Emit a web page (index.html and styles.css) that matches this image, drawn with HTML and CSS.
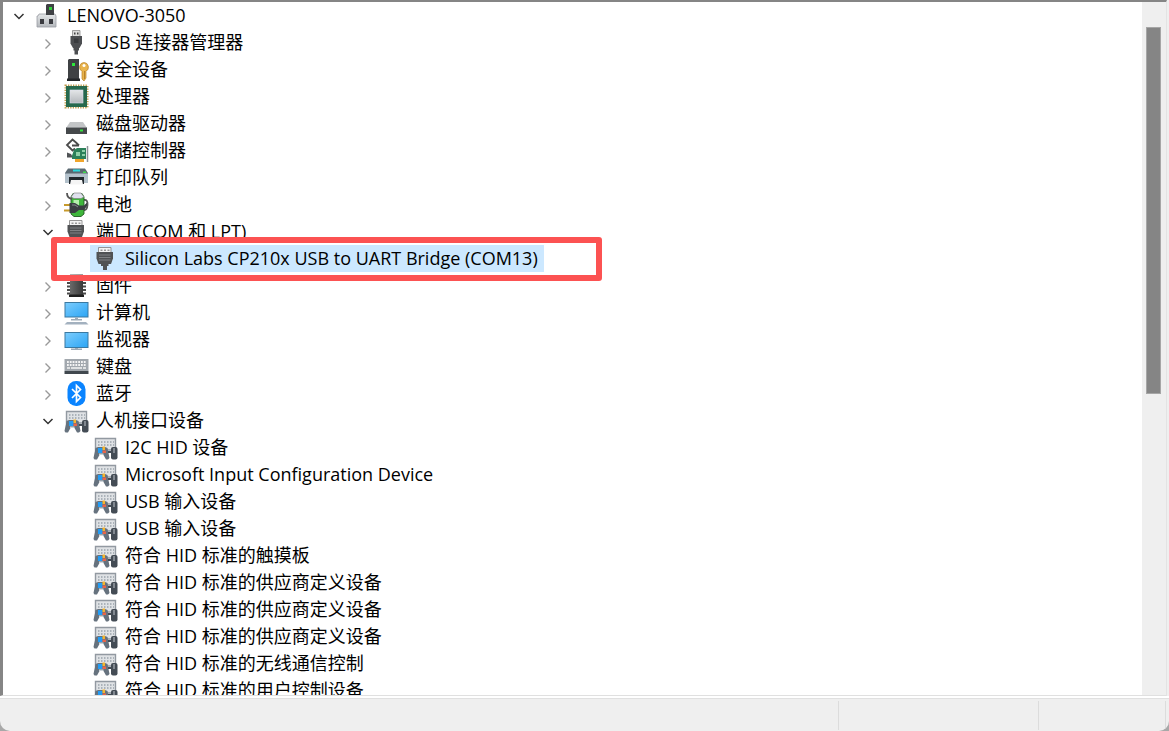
FILE: index.html
```html
<!DOCTYPE html>
<html lang="zh-CN">
<head>
    <meta charset="UTF-8">
    <meta name="viewport" content="width=device-width, initial-scale=1.0">
    <title>设备管理器</title>
    <link rel="stylesheet" href="styles.css">
</head>
<body>
    <svg class="sprite" aria-hidden="true">
        <defs>
            <linearGradient id="metal" x1="0" y1="0" x2="0" y2="1">
                <stop offset="0" stop-color="#e4e6e8"/>
                <stop offset="1" stop-color="#b4b8bc"/>
            </linearGradient>
            <linearGradient id="screen" x1="0" y1="0" x2="1" y2="1">
                <stop offset="0" stop-color="#7dcdfd"/>
                <stop offset="1" stop-color="#2ba5f5"/>
            </linearGradient>
            <linearGradient id="dark" x1="0" y1="0" x2="1" y2="0">
                <stop offset="0" stop-color="#6a6a6a"/>
                <stop offset="1" stop-color="#393939"/>
            </linearGradient>
        </defs>

        <symbol id="chev-right" viewBox="0 0 20 27">
            <path d="M7.5 10.5 12 15 7.5 19.5" fill="none" stroke="#999" stroke-width="1.4"/>
        </symbol>
        <symbol id="chev-down" viewBox="0 0 20 27">
            <path d="M5.5 12 10 16.5 14.5 12" fill="none" stroke="#333" stroke-width="1.5"/>
        </symbol>

        <symbol id="i-root" viewBox="0 0 25 27">
            <path d="M3 14 4 12H20L21 14V25H2V14Z" fill="url(#metal)" stroke="#9a9da3" stroke-width=".8"/>
            <path d="M11 3 12 2H19V13H11Z" fill="#3f4144"/>
            <rect x="14" y="5" width="3" height="3" fill="#32d23c"/>
            <path d="M5 17H9V22H5ZM14 17H18V22H14Z" fill="#3a3b40"/>
        </symbol>
        <symbol id="i-usb" viewBox="0 0 25 27">
            <path d="M8.5 1.5H16V8H8.5Z" fill="#dcdcdc" stroke="#8c8c8c" stroke-width=".8"/>
            <path d="M10 3.500h1.500v2H10ZM13 3.500h1.500v2H13Z" fill="#444"/>
            <path d="M6.500 7H18V14.500L15.500 19H9L6.500 14.500Z" fill="#4c4e51"/>
            <path d="M9.500 18H15V21.500H14V25.500H10.500V21.500H9.500Z" fill="#4c4e51"/>
            <path d="M10 9.500H14.500V14H10Z" fill="#393b3e"/>
        </symbol>
        <symbol id="i-security" viewBox="0 0 25 27">
            <path d="M4 4 5 3H15V23H4Z" fill="#3f4144"/>
            <path d="M3 22.500H16V25H3Z" fill="#25272a"/>
            <rect x="8" y="7" width="3" height="3" fill="#2ee83a"/>
            <path d="M20 6.500a4.700 4.700 0 0 1 2 8.800V22l-2 3-2-2v-7.700A4.700 4.700 0 0 1 20 6.500Z" fill="#e9b44c" stroke="#b8812a" stroke-width=".7"/>
            <circle cx="20" cy="9.500" r="1.500" fill="#fff"/>
            <path d="M20.500 15V23" stroke="#b8812a"/>
        </symbol>
        <symbol id="i-cpu" viewBox="0 0 25 27">
            <rect x="1.500" y="2.500" width="22" height="22" fill="none" stroke="#c09a4a" stroke-width="2" stroke-dasharray="1.300 1.200"/>
            <rect x="2" y="3" width="21" height="21" fill="#27694d"/>
            <rect x="6" y="7" width="13" height="13" fill="url(#metal)" stroke="#dde" stroke-width=".6"/>
        </symbol>
        <symbol id="i-disk" viewBox="0 0 25 27">
            <path d="M6 12H19L23 18H2Z" fill="#c3c5c7"/>
            <path d="M2 17.500H23V24H2Z" fill="#45484b"/>
            <path d="M2 17.500H23" stroke="#8d9093"/>
            <rect x="16" y="19.500" width="3" height="2" fill="#35e23f"/>
        </symbol>
        <symbol id="i-storage" viewBox="0 0 25 27">
            <path d="M12 5.500 8.500 2.500 3 8 8.500 13.500 11 11.500M8 8.500H15M12 5.500 15 8.500" fill="none" stroke="#4a4a4a" stroke-width="1.800"/>
            <path d="M3 15.500 7 17 9 20.500H3Z" fill="#505356"/>
            <path d="M10 13 13 11H22V22H8V18.500Z" fill="#2c8059"/>
            <path d="M12 15h4v4h-4ZM18 13h3v2h-3ZM18 17h3v2h-3Z" fill="#8fd0a8"/>
            <path d="M11 22H20V25H11Z" fill="#f0a52c"/>
            <path d="M23.500 9V25" stroke="#8d9297" stroke-width="1.500"/>
        </symbol>
        <symbol id="i-printer" viewBox="0 0 25 27">
            <path d="M4 4.500H21L24 9V11H1V9Z" fill="#5b6972"/>
            <path d="M9 5.500H16V7.500H9Z" fill="#2bd9dc"/>
            <path d="M19 7.500h3v1.500h-3Z" fill="#3fe04a"/>
            <path d="M1 9.500H24V19H1Z" fill="#b3c1cb"/>
            <path d="M5 13H20V20H5Z" fill="#22292e"/>
            <path d="M7 16H18L19 20.500H6Z" fill="#f5f5f5"/>
        </symbol>
        <symbol id="i-battery" viewBox="0 0 25 27">
            <path d="M20 9Q24 8.500 23.500 14T20 19" fill="none" stroke="#555" stroke-width="1.800"/>
            <path d="M7 6 9 2.500H18L20 6V23L17 25.500H10L7 23Z" fill="#3fb63c" stroke="#235a22" stroke-width=".9"/>
            <path d="M7 6 10 2H17L20 6 17 7.500H10Z" fill="#e0e1ee" stroke="#777" stroke-width=".6"/>
            <path d="M9.500 9H15V17H9.500Z" fill="#b6efad"/>
            <path d="M3 2Q3 7 8 8" fill="none" stroke="#555" stroke-width="1.800"/>
            <path d="M0 14H7M0 19.500H7" stroke="#c79a2c" stroke-width="2"/>
            <path d="M5.500 12H11L15 14.500H20L23 11.500V15L20 19H15L11 22H5.500Z" fill="#3b3e42"/>
            <path d="M8 14H11L14 16" fill="none" stroke="#85898d"/>
        </symbol>
        <symbol id="i-port" viewBox="0 0 25 27">
            <path d="M5.500 2.500H18V8H5.500Z" fill="#f4f4f4" stroke="#8b8b8b" stroke-width=".9"/>
            <path d="M7.500 4.500h2v1.500h-2ZM11 4.500h2v1.500h-2ZM14.500 4.500h2v1.500h-2Z" fill="#999"/>
            <path d="M3.500 7H20V13.500L18 19H5.500L3.500 13.500Z" fill="#505254"/>
            <path d="M6 10H17.500M6 12.500H17.500M6 15H17.500" stroke="#85878a" stroke-width=".9"/>
            <path d="M8 18.500H15.500V21H14V25H10V21H8Z" fill="#505254"/>
        </symbol>
        <symbol id="i-firmware" viewBox="0 0 25 27">
            <path d="M4.500 3V24M20.500 3V24" stroke="#4a4a4a" stroke-width="3" stroke-dasharray="2 1.500"/>
            <path d="M6 2.500H19V25H6Z" fill="url(#dark)"/>
            <path d="M5 22.500H20V25H5Z" fill="#1f1f1f"/>
        </symbol>
        <symbol id="i-computer" viewBox="0 0 25 27">
            <rect x="1" y="3.500" width="23" height="14.500" fill="url(#screen)" stroke="#3a79a1"/>
            <path d="M11 18.500H14V20H18V21.500H7V20H11Z" fill="#9eabb7"/>
            <path d="M3 23H22L24.500 25.500H.500Z" fill="#a3b1bf"/>
        </symbol>
        <symbol id="i-monitor" viewBox="0 0 25 27">
            <rect x="1" y="6.500" width="23" height="15" fill="url(#screen)" stroke="#3a79a1"/>
            <path d="M11 22H14V22.500H18V24H7V22.500H11Z" fill="#9eabb7"/>
        </symbol>
        <symbol id="i-keyboard" viewBox="0 0 25 27">
            <path d="M.5 6H24.500V18H.5Z" fill="#a2a8ae"/>
            <path d="M3 9H22M3 12H22" stroke="#f4f4f4" stroke-width="1.800" stroke-dasharray="1.800 1"/>
            <path d="M3 15H6M7 15H18M19 15H22" stroke="#f4f4f4" stroke-width="1.600"/>
            <path d="M.5 18H24.500V21H.5Z" fill="#41484e"/>
        </symbol>
        <symbol id="i-bluetooth" viewBox="0 0 25 27">
            <rect x="3.500" y="1" width="18" height="25" rx="8.500" fill="#0a84ff"/>
            <path d="M8 9 16.500 17.500 12.500 21.500V5.500L16.500 9.500 8 18" fill="none" stroke="#fff" stroke-width="1.700"/>
        </symbol>
        <symbol id="i-hid" viewBox="0 0 25 27">
            <path d="M2.500 4.500H22.500V16H2.500Z" fill="#dfe2e5" stroke="#9299a1" stroke-width="1.400"/>
            <path d="M5 8H21M5 11H21" stroke="#9ba2aa" stroke-width="1.400" stroke-dasharray="1.500 1.500"/>
            <path d="M2.500 14 5 13H12L14.500 14 16.500 24 15 25.500H13L10.500 21H6.500L4 25.500H1.500L.5 24Z" fill="#66727e"/>
            <path d="M5 14h4.500v5H5Z" fill="#239cf5"/>
            <path d="M9.500 12.500H12V16H9.500Z" fill="#f5b52e"/>
            <path d="M9.500 16.500H13V19H9.500Z" fill="#e8654a"/>
            <path d="M6 19.500h4.500V21H6Z" fill="#cdd4da"/>
            <rect x="18" y="13" width="6.500" height="12.500" rx="2" fill="#444c55"/>
            <path d="M15 18H18" stroke="#444c55" stroke-width="2"/>
            <path d="M21 14V19" stroke="#a5abb2" stroke-width="1.300"/>
        </symbol>
    </svg>

    <div class="window">
        <main class="panel">
            <div class="tree">
                <ul class="root">
                    <li>
                        <div class="row"><button class="toggle" aria-label="折叠"><svg><use href="#chev-down"/></svg></button><span class="item"><svg class="icon"><use href="#i-root"/></svg>LENOVO-3050</span></div>
                        <ul>
                            <li><div class="row"><button class="toggle" aria-label="展开"><svg><use href="#chev-right"/></svg></button><span class="item"><svg class="icon"><use href="#i-usb"/></svg>USB 连接器管理器</span></div></li>
                            <li><div class="row"><button class="toggle" aria-label="展开"><svg><use href="#chev-right"/></svg></button><span class="item"><svg class="icon"><use href="#i-security"/></svg>安全设备</span></div></li>
                            <li><div class="row"><button class="toggle" aria-label="展开"><svg><use href="#chev-right"/></svg></button><span class="item"><svg class="icon"><use href="#i-cpu"/></svg>处理器</span></div></li>
                            <li><div class="row"><button class="toggle" aria-label="展开"><svg><use href="#chev-right"/></svg></button><span class="item"><svg class="icon"><use href="#i-disk"/></svg>磁盘驱动器</span></div></li>
                            <li><div class="row"><button class="toggle" aria-label="展开"><svg><use href="#chev-right"/></svg></button><span class="item"><svg class="icon"><use href="#i-storage"/></svg>存储控制器</span></div></li>
                            <li><div class="row"><button class="toggle" aria-label="展开"><svg><use href="#chev-right"/></svg></button><span class="item"><svg class="icon"><use href="#i-printer"/></svg>打印队列</span></div></li>
                            <li><div class="row"><button class="toggle" aria-label="展开"><svg><use href="#chev-right"/></svg></button><span class="item"><svg class="icon"><use href="#i-battery"/></svg>电池</span></div></li>
                            <li>
                                <div class="row"><button class="toggle" aria-label="折叠"><svg><use href="#chev-down"/></svg></button><span class="item"><svg class="icon"><use href="#i-port"/></svg>端口 (COM 和 LPT)</span></div>
                                <ul>
                                    <li><div class="row leaf marked"><span class="item selected"><svg class="icon"><use href="#i-port"/></svg>Silicon Labs CP210x USB to UART Bridge (COM13)</span></div></li>
                                </ul>
                            </li>
                            <li><div class="row"><button class="toggle" aria-label="展开"><svg><use href="#chev-right"/></svg></button><span class="item"><svg class="icon"><use href="#i-firmware"/></svg>固件</span></div></li>
                            <li><div class="row"><button class="toggle" aria-label="展开"><svg><use href="#chev-right"/></svg></button><span class="item"><svg class="icon"><use href="#i-computer"/></svg>计算机</span></div></li>
                            <li><div class="row"><button class="toggle" aria-label="展开"><svg><use href="#chev-right"/></svg></button><span class="item"><svg class="icon"><use href="#i-monitor"/></svg>监视器</span></div></li>
                            <li><div class="row"><button class="toggle" aria-label="展开"><svg><use href="#chev-right"/></svg></button><span class="item"><svg class="icon"><use href="#i-keyboard"/></svg>键盘</span></div></li>
                            <li><div class="row"><button class="toggle" aria-label="展开"><svg><use href="#chev-right"/></svg></button><span class="item"><svg class="icon"><use href="#i-bluetooth"/></svg>蓝牙</span></div></li>
                            <li>
                                <div class="row"><button class="toggle" aria-label="折叠"><svg><use href="#chev-down"/></svg></button><span class="item"><svg class="icon"><use href="#i-hid"/></svg>人机接口设备</span></div>
                                <ul>
                                    <li><div class="row leaf"><span class="item"><svg class="icon"><use href="#i-hid"/></svg>I2C HID 设备</span></div></li>
                                    <li><div class="row leaf"><span class="item"><svg class="icon"><use href="#i-hid"/></svg>Microsoft Input Configuration Device</span></div></li>
                                    <li><div class="row leaf"><span class="item"><svg class="icon"><use href="#i-hid"/></svg>USB 输入设备</span></div></li>
                                    <li><div class="row leaf"><span class="item"><svg class="icon"><use href="#i-hid"/></svg>USB 输入设备</span></div></li>
                                    <li><div class="row leaf"><span class="item"><svg class="icon"><use href="#i-hid"/></svg>符合 HID 标准的触摸板</span></div></li>
                                    <li><div class="row leaf"><span class="item"><svg class="icon"><use href="#i-hid"/></svg>符合 HID 标准的供应商定义设备</span></div></li>
                                    <li><div class="row leaf"><span class="item"><svg class="icon"><use href="#i-hid"/></svg>符合 HID 标准的供应商定义设备</span></div></li>
                                    <li><div class="row leaf"><span class="item"><svg class="icon"><use href="#i-hid"/></svg>符合 HID 标准的供应商定义设备</span></div></li>
                                    <li><div class="row leaf"><span class="item"><svg class="icon"><use href="#i-hid"/></svg>符合 HID 标准的无线通信控制</span></div></li>
                                    <li><div class="row leaf"><span class="item"><svg class="icon"><use href="#i-hid"/></svg>符合 HID 标准的用户控制设备</span></div></li>
                                </ul>
                            </li>
                        </ul>
                    </li>
                </ul>
            </div>
            <div class="scrollbar"><div class="thumb"></div></div>
        </main>
        <footer class="statusbar">
            <div class="pane"></div>
            <div class="pane pane-mid"></div>
            <div class="pane pane-end"></div>
        </footer>
    </div>
</body>
</html>
```
FILE: styles.css
```css
*,
*::after {
    box-sizing: border-box;
}

body {
    margin: 0;
    background: #a8a8a8;
    color: #000;
    font-family: "Open Sans", "Noto Sans CJK SC", sans-serif;
    font-size: 18px;
    line-height: 27px;
}

ul {
    list-style: none;
    margin: 0;
    padding: 0;
}

.sprite {
    position: absolute;
    width: 0;
    height: 0;
}

.window {
    display: flex;
    flex-direction: column;
    height: 100vh;
    background: #efefef;
    border-radius: 0 0 10px 10px;
    overflow: hidden;
}

.panel {
    flex: 1;
    min-height: 0;
    display: flex;
    margin-right: 2px;
    background: #fff;
    border-top: 2px solid #858585;
    border-left: 3px solid #858585;
    border-right: 1px solid #e3e3e3;
    border-bottom: 1px solid #e0e0e0;
}

/* device tree */
.tree {
    flex: 1;
    overflow: hidden;
}

.root {
    padding-left: 6px;
}

.root ul {
    padding-left: 29px;
}

.row {
    display: flex;
    align-items: center;
    height: 27px;
    white-space: nowrap;
}

.toggle {
    width: 20px;
    height: 27px;
    margin-right: 3px;
    padding: 0;
    border: none;
    background: none;
    cursor: pointer;
}

.toggle svg {
    display: block;
    width: 20px;
    height: 27px;
}

.item {
    display: flex;
    align-items: center;
    height: 27px;
    padding: 0 6px 0 3px;
}

.icon {
    width: 25px;
    height: 27px;
    margin-right: 7px;
}

.leaf {
    padding-left: 23px;
}

.selected {
    background: #cce8ff;
}

/* red frame around the port to look for */
.marked {
    position: relative;
}

.marked::after {
    content: "";
    position: absolute;
    top: -8px;
    left: -16px;
    width: 551px;
    height: 44px;
    border: 6px solid #fc5252;
    border-radius: 3px;
}

.scrollbar {
    width: 24px;
    padding: 25px 5px 0 4px;
    background: #efefef;
}

.thumb {
    height: 55%;
    background: #858585;
    border: 1px solid #a6a6a6;
}

/* status bar */
.statusbar {
    display: flex;
    height: 35px;
    padding: 3px 3px 1px 0;
    border-top: 2px solid #fff;
    box-shadow: inset 0 1px #e0e0e0;
}

.pane {
    flex: 1;
    border-right: 1px solid #dcdcdc;
}

.pane-mid {
    flex: none;
    width: 200px;
}

.pane-end {
    flex: none;
    width: 127px;
}
```
